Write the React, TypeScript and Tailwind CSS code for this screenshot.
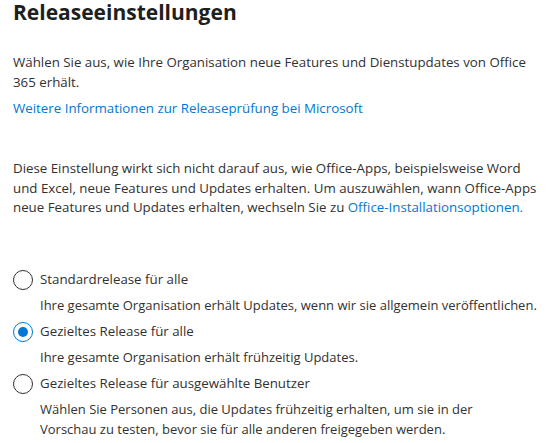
import React, { useState } from 'react';

const options = [
  {
    id: 'standard',
    label: 'Standardrelease für alle',
    description: 'Ihre gesamte Organisation erhält Updates, wenn wir sie allgemein veröffentlichen.',
    descWidth: 'max-w-none',
  },
  {
    id: 'targeted-all',
    label: 'Gezieltes Release für alle',
    description: 'Ihre gesamte Organisation erhält frühzeitig Updates.',
    descWidth: 'max-w-none',
  },
  {
    id: 'targeted-selected',
    label: 'Gezieltes Release für ausgewählte Benutzer',
    description:
      'Wählen Sie Personen aus, die Updates frühzeitig erhalten, um sie in der Vorschau zu testen, bevor sie für alle anderen freigegeben werden.',
    descWidth: 'max-w-[485px]',
  },
];

export default function App() {
  const [selected, setSelected] = useState('targeted-all');

  return (
    <div
      className="w-[547px] h-[443px] bg-white text-[#323130] pl-[13px] pr-[6px] overflow-hidden"
      style={{ fontFamily: '"Segoe UI", "Open Sans", sans-serif' }}
    >
      <h1 className="text-[21px] font-bold leading-[22px] pt-[1px] text-[#201f1e]">Releaseeinstellungen</h1>

      <p className="mt-[29px] text-[13.3px] leading-[20px]">
        Wählen Sie aus, wie Ihre Organisation neue Features und Dienstupdates von Office 365 erhält.
      </p>
      <a href="#" className="block mt-[6px] text-[13.3px] leading-[20px] text-[#0078d4]">
        Weitere Informationen zur Releaseprüfung bei Microsoft
      </a>

      <p className="mt-[41px] text-[13.3px] leading-[19.5px]">
        Diese Einstellung wirkt sich nicht darauf aus, wie Office-Apps, beispielsweise Word und Excel, neue
        Features und Updates erhalten. Um auszuwählen, wann Office-Apps neue Features und Updates erhalten,
        wechseln Sie zu <a href="#" className="text-[#0078d4]">Office-Installationsoptionen.</a>
      </p>

      <div className="mt-[49px] flex flex-col gap-[4px]">
        {options.map((opt) => {
          const checked = selected === opt.id;
          return (
            <div key={opt.id}>
              <label className="flex items-center gap-[7px] cursor-pointer h-[26px]">
                <input
                  type="radio"
                  name="release"
                  className="sr-only"
                  checked={checked}
                  onChange={() => setSelected(opt.id)}
                />
                <span
                  className={`w-[20px] h-[20px] shrink-0 rounded-full border flex items-center justify-center ${
                    checked ? 'border-[#0078d4]' : 'border-[#323130]'
                  }`}
                >
                  {checked && <span className="w-[10px] h-[10px] rounded-full bg-[#0078d4]" />}
                </span>
                <span className="text-[13.3px] text-[#323130]">{opt.label}</span>
              </label>
              <p className={`pl-[27px] mt-[2px] text-[13px] leading-[20px] text-[#323130] ${opt.descWidth}`}>
                {opt.description}
              </p>
            </div>
          );
        })}
      </div>
    </div>
  );
}
